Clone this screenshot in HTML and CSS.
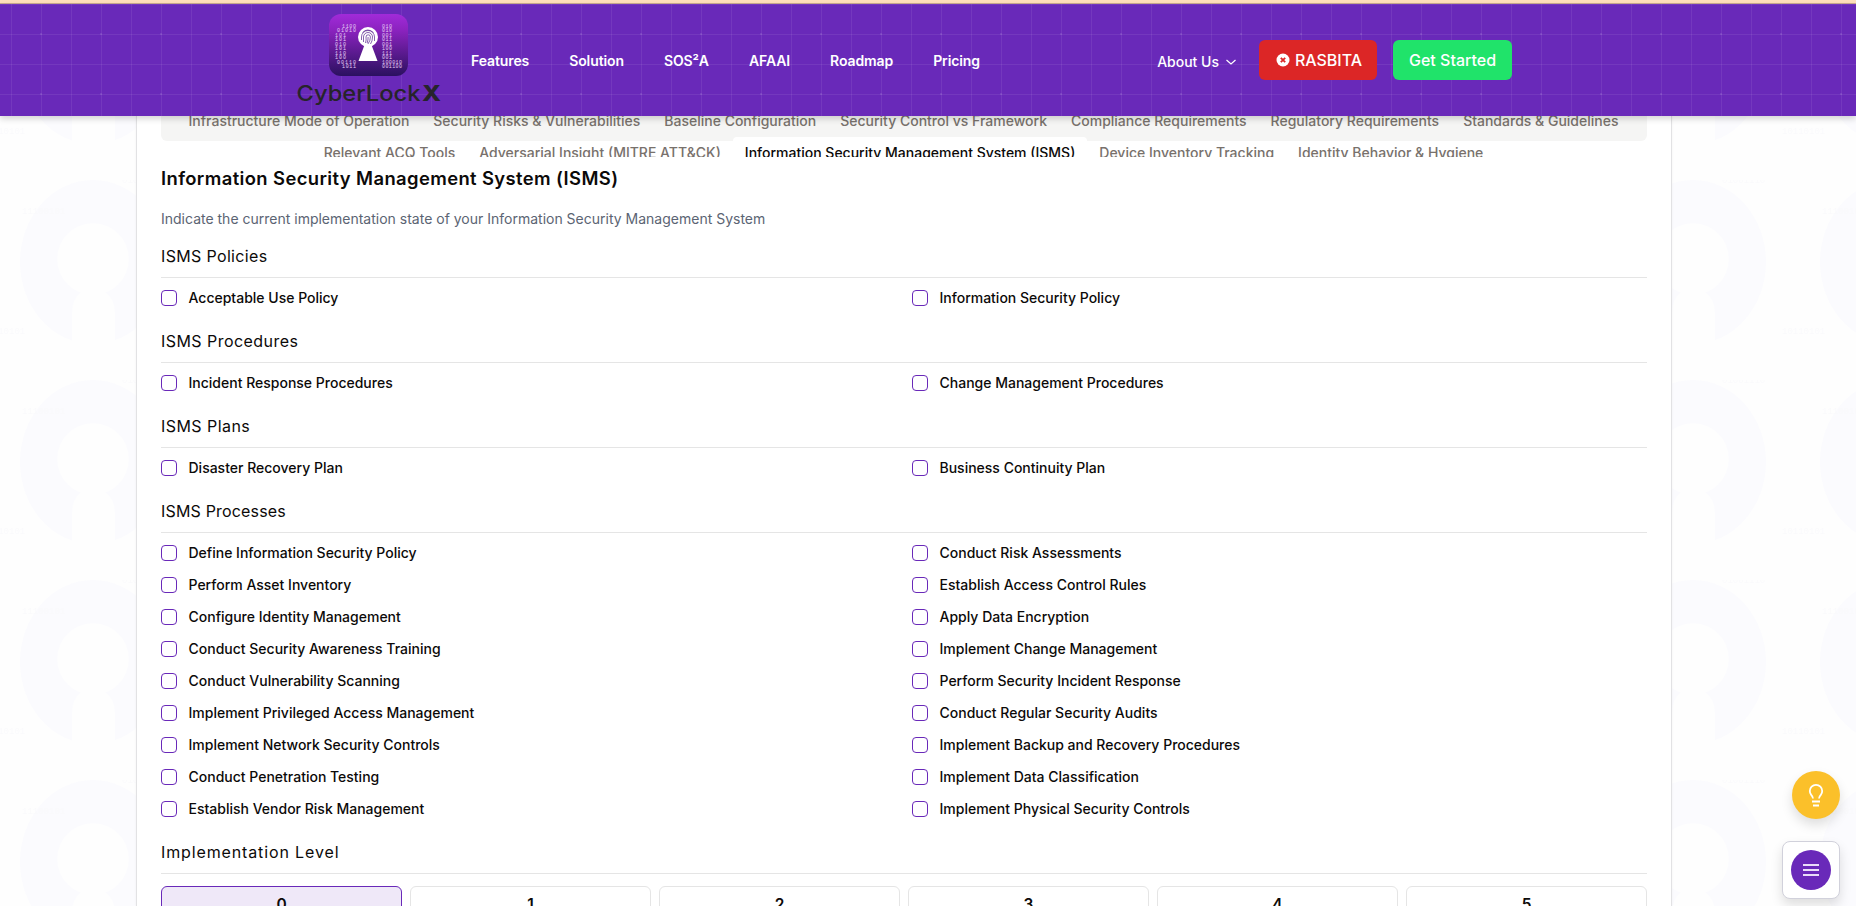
FILE: index.html
```html
<!DOCTYPE html>
<html lang="en">
<head>
<meta charset="utf-8">
<title>CyberLockX</title>
<link rel="stylesheet" href="styles.css">
</head>
<body>
<svg class="backdrop" width="1856" height="906" aria-hidden="true">
  <defs>
    <pattern id="keyholes" x="0" y="-20" width="200" height="200" patternUnits="userSpaceOnUse">
      <ellipse cx="93" cy="82" rx="73" ry="82" fill="#fbfbfe"/>
      <path d="M81 112h24q10 7 10 20v40H72v-40q0-13 9-20z" fill="#fefefe"/>
      <circle cx="93" cy="79" r="36" fill="#fefefe"/>
      <g class="bits"><text x="22" y="34">11100101</text><text x="122" y="3">01001110</text><text x="-18" y="154">10110101</text><text x="182" y="154">10110101</text></g>
    </pattern>
  </defs>
  <rect width="1856" height="906" fill="url(#keyholes)"/>
</svg>
<div class="announce"></div>
<header class="header">
  <svg class="grid" width="100%" height="112" aria-hidden="true">
    <defs><pattern id="grid" x="11" y="0" width="60" height="60" patternUnits="userSpaceOnUse">
      <path d="M.5 0v60M30.5 0v60M0 .5h60M0 30.5h60" stroke="#fff" stroke-opacity=".07"/>
      <rect x="29" y="29" width="2" height="2" fill="#fff" fill-opacity=".09"/>
    </pattern></defs>
    <rect width="100%" height="112" fill="url(#grid)"/>
  </svg>
  <div class="bar">
    <div class="logo">
      <svg width="80" height="62" viewBox="0 0 80 62">
        <defs><linearGradient id="badge" x1="0" y1="0" x2="0" y2="1"><stop stop-color="#a12bd9"/><stop offset=".25" stop-color="#8c23c0"/><stop offset="1" stop-color="#2b1160"/></linearGradient></defs>
        <rect width="79" height="62" rx="12" fill="url(#badge)"/>
        <g class="digits">
          <text x="13" y="13.500" textLength="14">1100</text><text x="8" y="18" textLength="19">01010</text>
          <text x="6" y="22.500" textLength="11">101</text><text x="6" y="27" textLength="11">101</text><text x="6" y="31.500" textLength="11">010</text><text x="6" y="36" textLength="11">101</text><text x="6" y="40.500" textLength="11">110</text><text x="6" y="45" textLength="11">100</text>
          <text x="8" y="49.500" textLength="19">00110</text><text x="13" y="54" textLength="14">1011</text>
          <text x="53" y="13.500" textLength="10">010</text><text x="53" y="18" textLength="10">010</text><text x="53" y="22.500" textLength="10">001</text><text x="53" y="27" textLength="10">011</text><text x="53" y="31.500" textLength="10">001</text><text x="53" y="36" textLength="10">100</text><text x="53" y="40.500" textLength="10">111</text><text x="53" y="45" textLength="10">001</text>
          <text x="53" y="49.500" textLength="20">100010</text><text x="53" y="54" textLength="20">001100</text>
        </g>
        <circle cx="39" cy="23" r="10" fill="#fff"/>
        <path d="M35.500 31h7l6 16h-19z" fill="#fff"/>
        <g transform="translate(-.5 0)" fill="none" stroke="#56208e" stroke-width=".7"><path d="M33 26v-3a6.500 6.500 0 0 1 13 0v4M35 28v-5a4.500 4.500 0 0 1 9 0q0 4-2 7M37 29q1-3 .5-6a2.200 2.200 0 0 1 4.400 0q0 4-2.500 7M39.600 23q.2 3-1 6M34 18.500q5-5 11 0"/></g>
      </svg>
      <svg class="wordmark" width="146" height="28" viewBox="0 0 146 28"><text x=".5" y="19" textLength="124" lengthAdjust="spacingAndGlyphs">CyberLock</text><text class="x" x="126" y="19" textLength="19" lengthAdjust="spacingAndGlyphs">X</text></svg>
    </div>
    <nav class="nav"><a>Features</a><a>Solution</a><a>SOS²A</a><a>AFAAI</a><a>Roadmap</a><a>Pricing</a></nav>
    <div class="actions">
      <a class="about">About Us <svg width="12" height="12" viewBox="0 0 12 12" fill="none" stroke="#fff" stroke-width="1.200"><path d="M1.500 4l4.500 4 4.500-4"/></svg></a>
      <a class="btn red"><svg width="14" height="14" viewBox="0 0 14 14"><circle cx="7" cy="7" r="6.500" fill="#fff"/><path d="M4.800 4.800l4.400 4.400M9.200 4.800l-4.400 4.400" stroke="#dc2626" stroke-width="1.800"/></svg>RASBITA</a>
      <a class="btn green">Get Started</a>
    </div>
  </div>
</header>
<main class="card">
  <div class="tabs">
    <div class="row first"><span>Infrastructure Mode of Operation</span><span>Security Risks &amp; Vulnerabilities</span><span>Baseline Configuration</span><span>Security Control vs Framework</span><span>Compliance Requirements</span><span>Regulatory Requirements</span><span>Standards &amp; Guidelines</span></div>
    <div class="row second"><span>Relevant ACQ Tools</span><span>Adversarial Insight (MITRE ATT&amp;CK)</span><span class="active">Information Security Management System (ISMS)</span><span>Device Inventory Tracking</span><span>Identity Behavior &amp; Hygiene</span></div>
  </div>
  <h2>Information Security Management System (ISMS)</h2>
  <p class="lead">Indicate the current implementation state of your Information Security Management System</p>
  <section><h3 class="h-policies">ISMS Policies</h3><div class="checks"><label><i></i>Acceptable Use Policy</label><label><i></i>Information Security Policy</label></div></section>
  <section><h3 class="h-procedures">ISMS Procedures</h3><div class="checks"><label><i></i>Incident Response Procedures</label><label><i></i>Change Management Procedures</label></div></section>
  <section><h3 class="h-plans">ISMS Plans</h3><div class="checks"><label><i></i>Disaster Recovery Plan</label><label><i></i>Business Continuity Plan</label></div></section>
  <section><h3 class="h-processes">ISMS Processes</h3><div class="checks">
    <label><i></i>Define Information Security Policy</label><label><i></i>Conduct Risk Assessments</label>
    <label><i></i>Perform Asset Inventory</label><label><i></i>Establish Access Control Rules</label>
    <label><i></i>Configure Identity Management</label><label><i></i>Apply Data Encryption</label>
    <label><i></i>Conduct Security Awareness Training</label><label><i></i>Implement Change Management</label>
    <label><i></i>Conduct Vulnerability Scanning</label><label><i></i>Perform Security Incident Response</label>
    <label><i></i>Implement Privileged Access Management</label><label><i></i>Conduct Regular Security Audits</label>
    <label><i></i>Implement Network Security Controls</label><label><i></i>Implement Backup and Recovery Procedures</label>
    <label><i></i>Conduct Penetration Testing</label><label><i></i>Implement Data Classification</label>
    <label><i></i>Establish Vendor Risk Management</label><label><i></i>Implement Physical Security Controls</label>
  </div></section>
  <section><h3 class="h-level">Implementation Level</h3><div class="levels"><b class="on">0</b><b>1</b><b>2</b><b>3</b><b>4</b><b>5</b></div></section>
</main>
<button class="tip" aria-label="Tips"><svg width="24" height="24" viewBox="0 0 24 24" fill="none" stroke="#fff" stroke-width="1.800"><path d="M9 15.500c-.2-1.700-1-2.700-1.800-3.600A6.200 6.200 0 0 1 5.800 8a6.200 6.200 0 0 1 12.400 0c0 1.600-.6 2.900-1.400 3.900-.8.900-1.600 1.900-1.800 3.600M8 18.500h8M9 22.500h6"/></svg></button>
<div class="menu"><button aria-label="Menu"><svg width="16" height="14" viewBox="0 0 16 14" stroke="#e9dcf8" stroke-width="1.800"><path d="M0 2h16M0 7h16M0 12h16"/></svg></button></div>
</body>
</html>
```
FILE: styles.css
```css
* { box-sizing: border-box; }
body { margin: 0; height: 906px; overflow: hidden; background: #fefefe; color: #0c0a09; font-family: Inter, "Liberation Sans", sans-serif; font-size: 14px; }
button { border: 0; padding: 0; }
.backdrop { position: absolute; inset: 0; z-index: -1; }
.bits { font: 9px "Liberation Mono", monospace; fill: #fafafc; }
.announce { height: 4px; background: #ffdfba; border-bottom: 1px solid #c9a98f; }
.header { position: relative; z-index: 2; height: 112px; background: #6929b9; box-shadow: 0 3px 6px rgba(0,0,0,.16); }
.grid { position: absolute; inset: 0; }
.bar { position: relative; height: 112px; padding: 0 344px 0 296px; display: flex; align-items: flex-start; color: #fff; }
.logo { width: 146px; padding-top: 10px; display: flex; flex-direction: column; align-items: center; }
.logo svg { display: block; }
.digits { font: 5px "Liberation Mono", monospace; fill: #e6cdf5; }
.wordmark { margin-top: 6px; }
.wordmark text { font: 500 21.5px Inter, "Liberation Sans", sans-serif; fill: #27242b; }
.wordmark .x { font-weight: 800; }
.nav { display: flex; gap: 40px; padding: 46px 0 0 29px; line-height: 22px; font-weight: 600; letter-spacing: -.1px; }
.actions { display: flex; margin-left: auto; padding-top: 36px; align-items: flex-start; }
.about { display: flex; align-items: center; gap: 6px; margin: 11px 22px 0 0; line-height: 22px; font-weight: 500; }
.btn { height: 40px; display: flex; align-items: center; justify-content: center; border-radius: 6px; font-size: 16px; font-weight: 500; }
.red { width: 118px; padding-left: 2px; gap: 5px; background: #dc2626; margin-right: 16px; }
.green { width: 119px; background: #20e36a; }
.card { width: 1536px; height: 790px; margin-left: 136px; padding: 0 24px; background: #fff; border: solid #e2e2e4; border-width: 0 1px; box-shadow: 0 0 2px rgba(0,0,0,.06); overflow: hidden; }
.tabs { height: 41px; overflow: hidden; }
.row { display: flex; justify-content: center; padding-right: 1px; color: #78716c; font-weight: 500; line-height: 20px; white-space: nowrap; }
.row span { padding: 0 12px; }
.first { height: 25px; background: #f5f5f4; border-radius: 0 0 6px 6px; line-height: 10px; }
.second span { margin-top: -4px; padding-top: 6px; height: 32px; }
.second .active { background: #fff; border-radius: 4px; color: #0c0a09; }
h2 { margin: 8px 0 0; height: 28px; font-size: 18.4px; line-height: 26px; font-weight: 600; letter-spacing: .4px; white-space: nowrap; }
.lead { margin: 16px 0 0; font-size: 14px; line-height: 20px; color: #5b6473; }
h3 { margin: 16px 0 0; height: 33px; line-height: 22px; font-size: 16px; font-weight: 400; border-bottom: 1px solid #e5e5e5; }
.h-policies { letter-spacing: .34px; }
.h-procedures { letter-spacing: .45px; }
.h-plans { letter-spacing: .45px; }
.h-processes { letter-spacing: .17px; }
.h-level { letter-spacing: .87px; }
section { padding-bottom: 6px; }
.checks { margin-top: 10px; display: grid; grid-template-columns: 1fr 1fr; column-gap: 16px; row-gap: 12px; }
.checks label { display: flex; align-items: flex-start; height: 20px; line-height: 19px; font-weight: 500; }
.checks i { width: 16px; height: 16px; margin: 2px 11.5px 0 0; border: 1px solid #6929b9; border-radius: 4px; }
.levels { margin-top: 12px; display: grid; grid-template-columns: repeat(6, 1fr); gap: 8px; }
.levels b { height: 60px; border: 1px solid #e5e5e5; border-radius: 6px; text-align: center; padding-top: 6px; line-height: 24px; font-size: 15.5px; font-weight: 600; }
.levels .on { background: #efe8f8; border-color: #6929b9; }
.tip { position: absolute; left: 1792px; top: 771px; width: 48px; height: 48px; border-radius: 50%; background: #fbc02a; display: grid; place-items: center; box-shadow: 0 6px 12px rgba(0,0,0,.13); }
.menu { position: absolute; left: 1782px; top: 841px; width: 58px; height: 58px; border: 1px solid #d1d1db; border-radius: 8px; background: #fff; display: grid; place-items: center; box-shadow: 0 6px 12px rgba(0,0,0,.13); }
.menu button { width: 40px; height: 40px; border-radius: 50%; background: #6929b9; display: grid; place-items: center; }
```
